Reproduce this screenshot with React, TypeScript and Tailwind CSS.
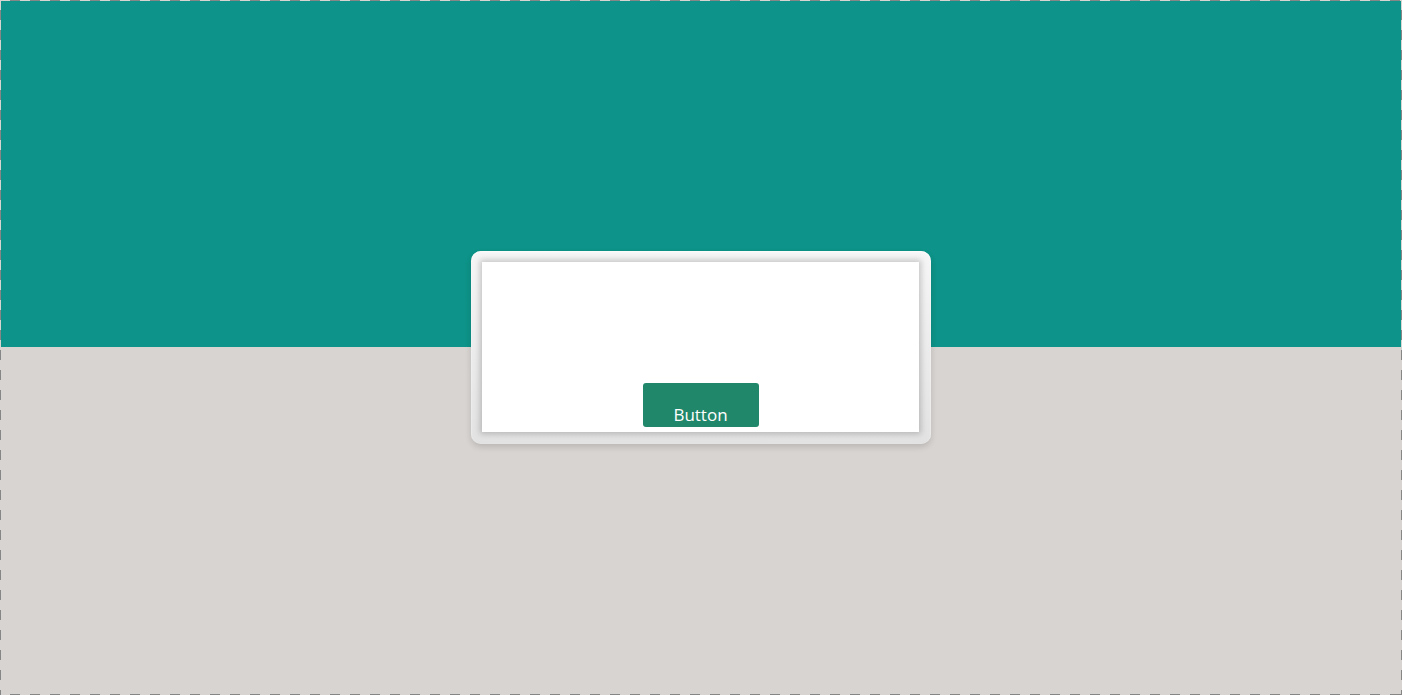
export default function App() {
  return (
    <div
      className="relative h-[695px] w-full p-px [background:repeating-linear-gradient(90deg,transparent_0_10px,#868686_10px_20px)_top/100%_1px_no-repeat,repeating-linear-gradient(90deg,transparent_0_10px,#868686_10px_20px)_bottom/100%_1px_no-repeat,repeating-linear-gradient(180deg,transparent_0_10px,#868686_10px_20px)_left/1px_100%_no-repeat,repeating-linear-gradient(180deg,transparent_0_10px,#868686_10px_20px)_right/2px_100%_no-repeat,#d8d4d1]"
      style={{ fontFamily: '"Open Sans", "Noto Sans", sans-serif' }}
    >
      <div className="flex h-full flex-col">
        <div className="h-[346px] bg-[#0d9389]" />
        <div className="flex-1 bg-[#d8d4d1]" />
      </div>

      <div className="absolute inset-0 flex items-center justify-center">
        <div className="rounded-[10px] bg-gradient-to-b from-[#f6f6f6] to-[#e2e2e2] pt-[11px] pr-[12px] pb-[12px] pl-[11px] shadow-[0_3px_6px_rgba(0,0,0,0.14),inset_0_1px_2px_rgba(255,255,255,0.9)]">
          <div className="flex h-[170px] w-[437px] flex-col items-center justify-end bg-white pb-[5px] shadow-[0_0_6px_2px_rgba(0,0,0,0.2)]">
            <button className="flex h-[44px] w-[116px] items-end justify-center rounded-[3px] bg-[#21876a] pb-[1px] text-[17px] leading-[23px] text-white">
              Button
            </button>
          </div>
        </div>
      </div>
    </div>
  );
}
